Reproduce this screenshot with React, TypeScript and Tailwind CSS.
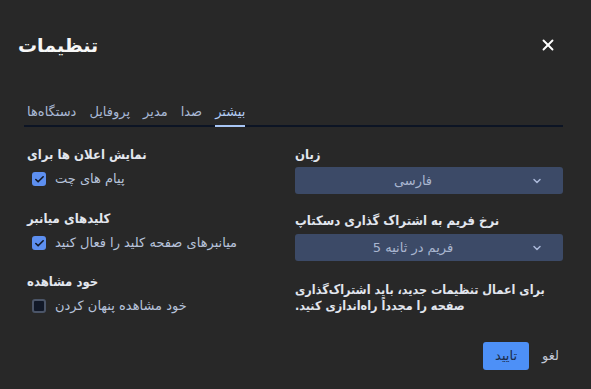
import { X, ChevronDown, Check } from "lucide-react";

const tabs = ["دستگاه‌ها", "پروفایل", "مدیر", "صدا", "بیشتر"];

function CheckRow({ label, checked }: { label: string; checked?: boolean }) {
  return (
    <div className="mt-[5px] flex h-[20px] items-center gap-[9px] pl-[5px]">
      {checked ? (
        <span className="flex h-[14px] w-[14px] items-center justify-center rounded-[3px] bg-[#5d8ff0]">
          <Check size={11} strokeWidth={3.5} className="text-[#101828]" />
        </span>
      ) : (
        <span className="h-[14px] w-[14px] rounded-[3px] border-2 border-[#4b5568] bg-[#111827]" />
      )}
      <span dir="rtl" className="text-[13px] leading-[18px] text-[#b7c3db]">
        {label}
      </span>
    </div>
  );
}

function Heading({ children, className = "" }: { children: string; className?: string }) {
  return (
    <div
      dir="rtl"
      className={`text-left text-[13px] font-bold leading-[18px] text-[#e2e6ee] [font-stretch:condensed] ${className}`}
    >
      {children}
    </div>
  );
}

function Select({ value, className = "" }: { value: string; className?: string }) {
  return (
    <div className={`flex h-[27px] items-center rounded-[3px] bg-[#3c4a67] pr-[20px] ${className}`}>
      <span dir="rtl" className="flex-1 text-center text-[13px] text-[#a9b6d0]">
        {value}
      </span>
      <ChevronDown size={12} strokeWidth={3} className="text-[#aab8d8]" />
    </div>
  );
}

export default function App() {
  return (
    <div
      className="flex h-[389px] w-[591px] flex-col bg-[#282828] pl-[18px] pr-[28px] pt-[31px]"
      style={{ fontFamily: '"DejaVu Sans", sans-serif' }}
    >
      <div className="flex h-[28px] items-center justify-between">
        <h1 dir="rtl" className="text-[19px] font-bold leading-[28px] text-[#f7f7f7]">
          تنظیمات
        </h1>
        <X size={18} strokeWidth={2.5} className="mr-[6px] text-white" />
      </div>

      <div className="ml-[6px] mt-[44px] flex gap-[13px] border-b-2 border-[#0c1424] pl-[3px]">
        {tabs.map((t) => (
          <div
            key={t}
            dir="rtl"
            className={`-mb-[2px] border-b-2 pb-[4px] text-[13px] leading-[18px] ${
              t === "بیشتر" ? "border-[#a8c6f5] text-[#b3cdf5]" : "border-transparent text-[#a9b9d6]"
            }`}
          >
            {t}
          </div>
        ))}
      </div>

      <div className="ml-[9px] mt-[19px] flex">
        <div className="flex-1">
          <Heading>نمایش اعلان ها برای</Heading>
          <CheckRow label="پیام های چت" checked />
          <Heading className="mt-[21px]">کلیدهای میانبر</Heading>
          <CheckRow label="میانبرهای صفحه کلید را فعال کنید" checked />
          <Heading className="mt-[20px]">خود مشاهده</Heading>
          <CheckRow label="خود مشاهده پنهان کردن" />
        </div>
        <div className="w-[268px]">
          <Heading>زبان</Heading>
          <Select value="فارسی" className="mt-[3px]" />
          <Heading className="mt-[18px]">نرخ فریم به اشتراک گذاری دسکتاپ</Heading>
          <Select value="فریم در ثانیه 5" className="mt-[4px]" />
          <p
            dir="rtl"
            className="mt-[21px] whitespace-nowrap text-left text-[12.5px] font-bold leading-[16px] text-[#e2e6ee] [font-stretch:condensed]"
          >
            برای اعمال تنظیمات جدید، باید اشتراک‌گذاری
            <br />
            صفحه را مجدداً راه‌اندازی کنید.
          </p>
        </div>
      </div>

      <div className="mt-[26px] flex items-center justify-end gap-[9px]">
        <button className="h-[28px] w-[46px] rounded-[3px] bg-[#4d90f7] text-[13px] text-[#1b2c4a]">
          تایید
        </button>
        <button className="px-[4px] text-[13px] text-[#c3c9d6]">لغو</button>
      </div>
    </div>
  );
}
